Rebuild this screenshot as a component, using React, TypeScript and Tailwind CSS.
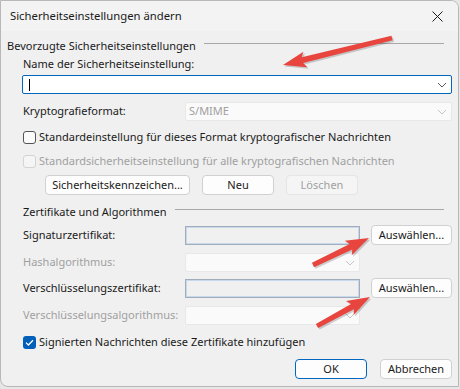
import React from "react";

const F = { fontFamily: '"Noto Sans", "Open Sans", sans-serif' };

function Chevron({ light }: { light?: boolean }) {
  return (
    <svg width="10" height="6" viewBox="0 0 10 6" className="shrink-0">
      <path d="M1 1 L5 5 L9 1" fill="none" stroke={light ? "#c4c4c4" : "#5a5a5a"} strokeWidth="1" />
    </svg>
  );
}

function Arrow({ tail, tip }: { tail: [number, number]; tip: [number, number] }) {
  const dx = tip[0] - tail[0];
  const dy = tip[1] - tail[1];
  const len = Math.hypot(dx, dy);
  const ux = dx / len, uy = dy / len;
  const px = -uy, py = ux;
  const L = 20, H = 8, w0 = 2.4, w1 = 3;
  const bx = tip[0] - ux * L, by = tip[1] - uy * L;
  const pts: [number, number][] = [
    [tail[0] + px * w0, tail[1] + py * w0],
    [bx + px * w1, by + py * w1],
    [bx + px * H - ux * 3, by + py * H - uy * 3],
    [tip[0], tip[1]],
    [bx - px * H - ux * 3, by - py * H - uy * 3],
    [bx - px * w1, by - py * w1],
    [tail[0] - px * w0, tail[1] - py * w0],
  ];
  const d = pts.map((p) => p.join(",")).join(" ");
  return (
    <g>
      <polygon points={d} fill="rgba(0,0,0,0.18)" transform="translate(1.5,1.5)" />
      <polygon points={d} fill="#e8453f" />
    </g>
  );
}

function Btn({ children, w, disabled, primary }: { children: React.ReactNode; w: string; disabled?: boolean; primary?: boolean }) {
  return (
    <div
      className={
        "h-[20px] flex items-center justify-center rounded-[4px] text-[11px] " +
        w +
        " " +
        (disabled
          ? "bg-[#f5f5f5] border border-[#e5e5e5] text-[#a0a0a0]"
          : primary
          ? "bg-[#fdfdfd] border border-[#0067c0] text-[#1a1a1a]"
          : "bg-[#fdfdfd] border border-[#d0d0d0] text-[#1a1a1a]")
      }
    >
      {children}
    </div>
  );
}

function Check({ checked, disabled }: { checked?: boolean; disabled?: boolean }) {
  if (checked)
    return (
      <div className="w-[13px] h-[13px] rounded-[3px] bg-[#005fb8] flex items-center justify-center shrink-0">
        <svg width="9" height="7" viewBox="0 0 9 7">
          <path d="M1 3.6 L3.4 6 L8 1.2" fill="none" stroke="white" strokeWidth="1.3" />
        </svg>
      </div>
    );
  return (
    <div
      className={
        "w-[13px] h-[13px] rounded-[3px] shrink-0 border " +
        (disabled ? "border-[#d4d4d4] bg-[#f5f5f5]" : "border-[#555] bg-[#fbfbfb]")
      }
    />
  );
}

function GroupHeader({ label, ml }: { label: string; ml: string }) {
  return (
    <div className={"h-[14px] flex items-center " + ml}>
      <span className="text-[11px] text-[#1a1a1a] whitespace-nowrap">{label}</span>
      <div className="flex-1 h-px bg-[#a8a8a8] ml-[8px] mr-[14px] -translate-y-[3px]" />
    </div>
  );
}

export default function App() {
  return (
    <div className="w-[460px] h-[389px] bg-[#e6e6e6] relative" style={F}>
      <div className="w-[459px] h-[387px] bg-[#f0f0f0] border border-[#b8b8b8] rounded-tr-[8px] rounded-bl-[8px] overflow-hidden flex flex-col text-[#1a1a1a]">
        <div className="h-[30px] bg-[#f3f3f3] flex items-center justify-between pl-[9px] pr-[15px] shrink-0">
          <span className="text-[11.3px]">Sicherheitseinstellungen ändern</span>
          <svg width="11" height="11" viewBox="0 0 11 11">
            <path d="M0.5 0.5 L10.5 10.5 M10.5 0.5 L0.5 10.5" stroke="#1a1a1a" strokeWidth="1" />
          </svg>
        </div>
        <div className="flex flex-col pt-[8px]">
          <GroupHeader label="Bevorzugte Sicherheitseinstellungen" ml="ml-[6px]" />
          <div className="h-[14px] mt-[4px] ml-[22px] flex items-center text-[11px]">Name der Sicherheitseinstellung:</div>
          <div className="h-[19px] mt-[4px] ml-[21px] mr-[6px] bg-white border border-[#0067c0] rounded-[2px] flex items-center justify-between pl-[6px] pr-[4px]">
            <div className="w-px h-[12px] bg-black" />
            <Chevron />
          </div>
          <div className="h-[19px] mt-[8px] ml-[22px] mr-[6px] flex items-center">
            <span className="w-[162px] text-[11px]">Kryptografieformat:</span>
            <div className="flex-1 h-[19px] bg-[#fafafa] border border-[#e8e8e8] rounded-[2px] flex items-center justify-between pl-[3px] pr-[4px]">
              <span className="text-[11px] text-[#a0a0a0]">S/MIME</span>
              <Chevron light />
            </div>
          </div>
          <div className="h-[14px] mt-[9px] ml-[22px] flex items-center gap-[3px]">
            <Check />
            <span className="text-[11px]">Standardeinstellung für dieses Format kryptografischer Nachrichten</span>
          </div>
          <div className="h-[14px] mt-[10px] ml-[22px] flex items-center gap-[3px]">
            <Check disabled />
            <span className="text-[11px] text-[#a0a0a0]">Standardsicherheitseinstellung für alle kryptografischen Nachrichten</span>
          </div>
          <div className="h-[20px] mt-[7px] ml-[44px] flex items-center gap-[12px]">
            <Btn w="w-[145px]">Sicherheitskennzeichen...</Btn>
            <Btn w="w-[72px]">Neu</Btn>
            <Btn w="w-[72px]" disabled>Löschen</Btn>
          </div>
          <div className="mt-[10px]">
            <GroupHeader label="Zertifikate und Algorithmen" ml="ml-[22px]" />
          </div>
          <div className="h-[20px] mt-[6px] ml-[22px] mr-[6px] flex items-center">
            <span className="w-[162px] text-[11px]">Signaturzertifikat:</span>
            <div className="w-[175px] h-[19px] border border-[#a3adba] bg-[#f0f0f0] shadow-[inset_0_0_0_1px_#c7d9ee]" />
            <div className="ml-[11px]"><Btn w="w-[81px]">Auswählen...</Btn></div>
          </div>
          <div className="h-[19px] mt-[8px] ml-[22px] flex items-center">
            <span className="w-[162px] text-[11px] text-[#a0a0a0]">Hashalgorithmus:</span>
            <div className="w-[175px] h-[19px] bg-[#fafafa] border border-[#e8e8e8] rounded-[2px] flex items-center justify-end pr-[4px]">
              <Chevron light />
            </div>
          </div>
          <div className="h-[20px] mt-[6px] ml-[22px] mr-[6px] flex items-center">
            <span className="w-[162px] text-[11px]">Verschlüsselungszertifikat:</span>
            <div className="w-[175px] h-[19px] border border-[#a3adba] bg-[#f0f0f0] shadow-[inset_0_0_0_1px_#c7d9ee]" />
            <div className="ml-[11px]"><Btn w="w-[81px]">Auswählen...</Btn></div>
          </div>
          <div className="h-[19px] mt-[8px] ml-[22px] flex items-center">
            <span className="w-[162px] text-[11px] text-[#a0a0a0]">Verschlüsselungsalgorithmus:</span>
            <div className="w-[175px] h-[19px] bg-[#fafafa] border border-[#e8e8e8] rounded-[2px] flex items-center justify-end pr-[4px]">
              <Chevron light />
            </div>
          </div>
          <div className="h-[14px] mt-[10px] ml-[22px] flex items-center gap-[3px]">
            <Check checked />
            <span className="text-[11px]">Signierten Nachrichten diese Zertifikate hinzufügen</span>
          </div>
          <div className="h-[20px] mt-[10px] mr-[6px] flex items-center justify-end gap-[13px]">
            <Btn w="w-[72px]" primary>OK</Btn>
            <Btn w="w-[72px]">Abbrechen</Btn>
          </div>
        </div>
      </div>
      <svg className="absolute left-0 top-0 pointer-events-none" width="460" height="389">
        <Arrow tail={[392, 38]} tip={[283, 65]} />
        <Arrow tail={[313, 265]} tip={[369, 238]} />
        <Arrow tail={[317, 326]} tip={[370, 297]} />
      </svg>
    </div>
  );
}
